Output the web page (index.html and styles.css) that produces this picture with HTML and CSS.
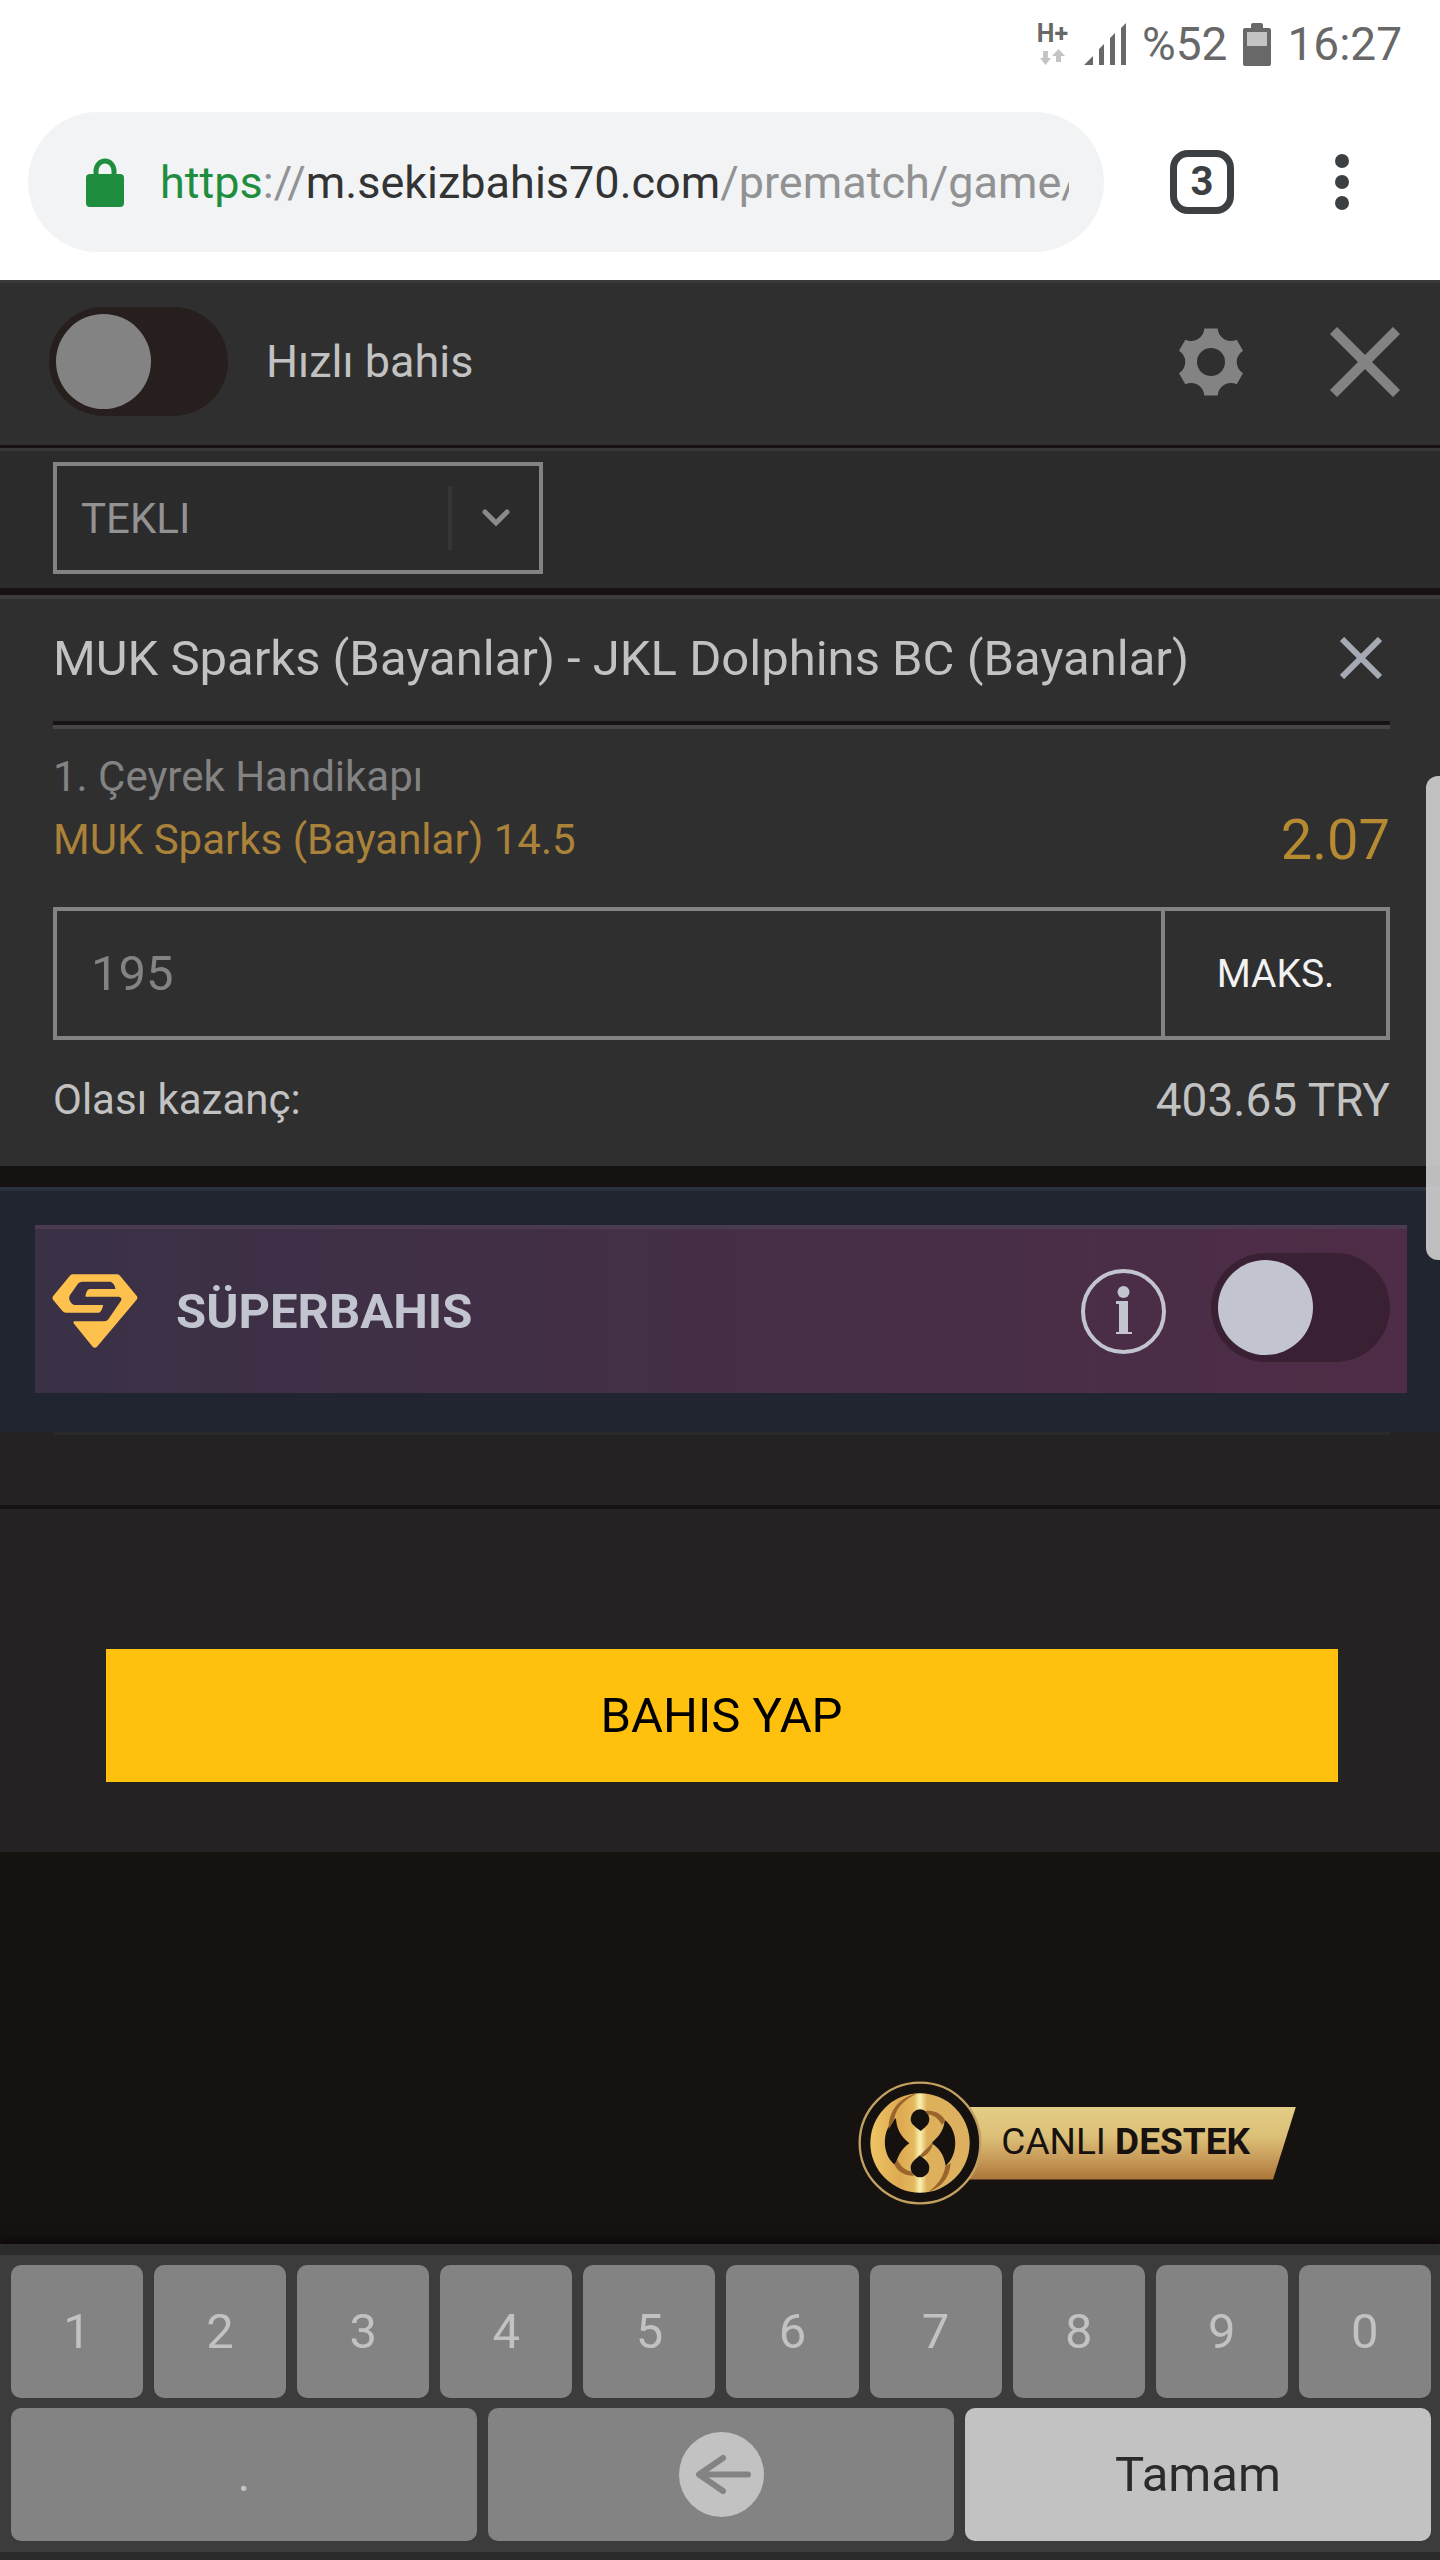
FILE: index.html
```html
<!DOCTYPE html>
<html lang="tr">

<head>
    <meta charset="UTF-8">
    <meta name="viewport" content="width=device-width, initial-scale=1.0">
    <title>Bahis Kuponu</title>
    <link rel="stylesheet" href="styles.css">
</head>

<body>
    <!-- Status bar -->
    <div class="status-bar">
        <div class="network">
            <span>H+</span>
            <svg width="26" height="16" viewBox="0 0 26 16">
                <path d="M4 2H9V9H12L6.500 16L1 9H4ZM17 13H22V7H26L19.500 0L13 7H17Z" fill="#c4c4c4" />
            </svg>
        </div>
        <svg width="42" height="42" viewBox="0 0 42 42" fill="#686868">
            <path d="M0 42L9 33V42ZM15 26L20 21V42H15ZM26 15L31 10V42H26ZM37 5L42 0V42H37Z" />
        </svg>
        <span>%52</span>
        <svg width="28" height="43" viewBox="0 0 28 43">
            <path d="M8 5V2Q8 0 10 0H18Q20 0 20 2V5H26Q28 5 28 7V41Q28 43 26 43H2Q0 43 0 41V7Q0 5 2 5Z" fill="#686868" />
            <rect x="4" y="9" width="20" height="14" fill="#c4c4c4" />
        </svg>
        <span>16:27</span>
    </div>

    <!-- Browser toolbar -->
    <div class="toolbar">
        <div class="address">
            <svg width="38" height="50" viewBox="0 0 38 50">
                <path d="M10 20V14A9 10 0 0 1 28 14V20" fill="none" stroke="#1e8e3e" stroke-width="5" />
                <rect y="17" width="38" height="33" rx="4" fill="#1e8e3e" />
            </svg>
            <div class="url"><span class="secure">https</span>://<span class="domain">m.sekizbahis70.com</span>/prematch/game/</div>
        </div>
        <button class="tabs" aria-label="Sekmeler">3</button>
        <button class="icon-button menu" aria-label="Menü">
            <svg width="14" height="56" viewBox="0 0 14 56" fill="#3c4043">
                <circle cx="7" cy="7" r="7" />
                <circle cx="7" cy="28" r="7" />
                <circle cx="7" cy="49" r="7" />
            </svg>
        </button>
    </div>

    <!-- Quick bet -->
    <div class="quick-bet">
        <input type="checkbox" class="toggle" id="quick">
        <label for="quick">Hızlı bahis</label>
        <button class="icon-button" aria-label="Ayarlar">
            <svg width="70" height="70" viewBox="-35 -35 70 70">
                <path fill="#838383" fill-rule="evenodd" d="M-6.700-33.500H6.700A13.300 13.300 0 0 0 25.700-22.300L32-11.300A13.300 13.300 0 0 0 32 11.300L25.700 22.300A13.300 13.300 0 0 0 6.700 33.500H-6.700A13.300 13.300 0 0 0-25.700 22.300L-32 11.300A13.300 13.300 0 0 0-32-11.300L-25.700-22.300A13.300 13.300 0 0 0-6.700-33.500ZM14 0A14 14 0 0 0-14 0A14 14 0 0 0 14 0Z" />
            </svg>
        </button>
        <button class="icon-button" aria-label="Kapat">
            <svg width="70" height="70" viewBox="-35 -35 70 70">
                <path d="M-31.500-31.500L31.500 31.500M31.500-31.500L-31.500 31.500" stroke="#838383" stroke-width="10" />
            </svg>
        </button>
    </div>

    <!-- Bet type -->
    <div class="bet-type">
        <div class="select-box">
            <select aria-label="Bahis türü">
                <option>TEKLI</option>
            </select>
            <span class="separator"></span>
            <svg width="30" height="20" viewBox="0 0 30 20">
                <path d="M4 4L15 15L26 4" fill="none" stroke="#8a8a8a" stroke-width="5" stroke-linecap="round" />
            </svg>
        </div>
    </div>

    <!-- Selected event -->
    <div class="event">
        <div class="event-title">
            <span>MUK Sparks (Bayanlar) - JKL Dolphins BC (Bayanlar)</span>
            <button class="icon-button" aria-label="Sil">
                <svg width="42" height="42" viewBox="0 0 42 42">
                    <path d="M2 2L40 40M40 2L2 40" stroke="#a4a9b4" stroke-width="6" />
                </svg>
            </button>
        </div>
        <div class="market">1. Çeyrek Handikapı</div>
        <div class="selection">
            <span>MUK Sparks (Bayanlar) 14.5</span>
            <span class="odds">2.07</span>
        </div>
        <div class="stake">
            <input type="text" value="195" aria-label="Miktar">
            <button>MAKS.</button>
        </div>
        <div class="winnings">
            <span>Olası kazanç:</span>
            <span class="amount">403.65 TRY</span>
        </div>
    </div>

    <!-- Super bet -->
    <div class="super">
        <div class="super-card">
            <svg width="86" height="74" viewBox="156 223 256 222">
                <path fill="#ffc14d" d="M216 224H352Q356 225 359 228L410 290Q412 295 410 299L290 441Q283 447 277 441L221 372Q217 366 223 365H312Q320 365 324 359L362 303Q367 294 356 291H256Q255 284 259 276Q262 268 268 268H345Q346 262 340 254Q335 246 330 246H246Q238 246 234 251L209 286Q204 295 209 304Q214 315 222 316H308Q309 320 304 330Q300 339 295 339H196Q191 339 187 335L158 300Q155 295 158 290L208 229Q212 224 216 224Z" />
            </svg>
            <label for="super">SÜPERBAHIS</label>
            <button class="icon-button" aria-label="Bilgi">
                <svg width="85" height="85" viewBox="0 0 85 85" fill="#c2c4cf">
                    <circle cx="42.500" cy="42.500" r="40.500" fill="none" stroke="#c2c4cf" stroke-width="4" />
                    <circle cx="42.500" cy="23" r="6" />
                    <path d="M35 32H47V63H51V65H35V63H38V35H35Z" />
                </svg>
            </button>
            <input type="checkbox" class="toggle toggle-super" id="super">
        </div>
    </div>

    <!-- Submit -->
    <div class="submit">
        <div class="summary"></div>
        <button>BAHIS YAP</button>
    </div>

    <!-- Live support -->
    <div class="support">
        <a href="#" class="support-link">
            <svg width="124" height="124" viewBox="114 93 372 372">
                <defs>
                    <linearGradient id="gold">
                        <stop offset="0" stop-color="#efc564" />
                        <stop offset="0.3" stop-color="#dda951" />
                        <stop offset="0.44" stop-color="#e5b95f" />
                        <stop offset="0.5" stop-color="#f9f2b2" />
                        <stop offset="0.57" stop-color="#deb05a" />
                        <stop offset="1" stop-color="#dcb160" />
                    </linearGradient>
                </defs>
                <circle cx="300" cy="279" r="181" fill="#15110f" stroke="#c2a062" stroke-width="7" />
                <circle cx="300" cy="279" r="149" fill="url(#gold)" />
                <g fill="#15110f">
                    <path d="M228 205C184 235 184 316 226 345C232 325 240 300 268 280C244 260 230 240 228 205Z" />
                    <path d="M374 210C416 240 416 316 377 347C372 315 358 294 334 280C350 264 372 246 374 210Z" />
                    <path d="M300 178A29 29 0 0 1 328 207C328 225 314 232 302 243C290 232 272 225 272 207A29 29 0 0 1 300 178Z" />
                    <path d="M300 316C312 327 328 336 328 354A28 28 0 0 1 272 354C272 336 288 327 300 316Z" />
                </g>
                <g fill="#9a652b">
                    <path d="M206 238C204 185 238 142 292 130C250 150 224 180 223 210Z" />
                    <path d="M317 183C345 180 366 193 376 212L366 225C356 206 342 195 321 192Z" />
                    <path d="M340 276C336 299 322 314 306 323L300 316Z" />
                    <path d="M232 329C242 350 256 360 274 365L281 378C252 377 232 364 223 343Z" />
                    <path d="M392 340C388 383 366 413 324 426C354 405 372 378 376 348Z" />
                </g>
            </svg>
            <span class="support-text">CANLI <b>DESTEK</b></span>
        </a>
    </div>

    <!-- Keypad -->
    <div class="keypad">
        <div class="keys">
            <button>1</button>
            <button>2</button>
            <button>3</button>
            <button>4</button>
            <button>5</button>
            <button>6</button>
            <button>7</button>
            <button>8</button>
            <button>9</button>
            <button>0</button>
        </div>
        <div class="keys">
            <button>.</button>
            <button aria-label="Geri al">
                <svg width="85" height="85" viewBox="0 0 85 85">
                    <circle cx="42.500" cy="42.500" r="42.500" fill="#c2c2c2" />
                    <path d="M69 42.500H21M44 26L20 42.500L44 59" fill="none" stroke="#838383" stroke-width="6" stroke-linecap="round" stroke-linejoin="round" />
                </svg>
            </button>
            <button class="done">Tamam</button>
        </div>
    </div>

    <div class="scroll-handle"></div>
</body>

</html>
```

FILE: styles.css
```css
* {
    box-sizing: border-box;
}

body {
    display: flex;
    flex-direction: column;
    min-height: 100vh;
    margin: 0;
    position: relative;
    font-family: Roboto, sans-serif;
    font-size: 42px;
    color: #c2c2c2;
    background-color: #161210;
}

button,
input,
select {
    font: inherit;
    color: inherit;
    margin: 0;
    padding: 0;
    border: none;
    border-radius: 0;
    background: none;
}

svg {
    display: block;
    flex-shrink: 0;
}

.icon-button {
    display: flex;
    align-items: center;
    justify-content: center;
    cursor: pointer;
}

/* Status bar */
.status-bar {
    display: flex;
    justify-content: flex-end;
    align-items: center;
    gap: 16px;
    height: 88px;
    padding: 0 38px;
    background-color: #fff;
    color: #686868;
    font-size: 46px;
}

.network {
    display: flex;
    flex-direction: column;
    align-items: center;
    gap: 4px;
    font-size: 25px;
    font-weight: bold;
    line-height: 22px;
}

/* Browser toolbar */
.toolbar {
    display: flex;
    align-items: center;
    padding: 24px 78px 28px 28px;
    background-color: #fff;
}

.address {
    flex: 1;
    min-width: 0;
    display: flex;
    align-items: center;
    gap: 36px;
    height: 140px;
    padding: 0 35px 0 58px;
    border-radius: 70px;
    background-color: #f1f3f5;
}

.url {
    flex: 1;
    overflow: hidden;
    white-space: nowrap;
    font-size: 45px;
    color: #929292;
}

.secure {
    color: #1e8e3e;
}

.domain {
    color: #333;
}

.tabs {
    width: 64px;
    height: 64px;
    margin-left: 66px;
    border: 7px solid #3c4043;
    border-radius: 18px;
    color: #3c4043;
    font-size: 40px;
    font-weight: bold;
    line-height: 48px;
}

.menu {
    width: 40px;
    margin-left: 88px;
}

/* Toggle switch */
.toggle {
    appearance: none;
    flex-shrink: 0;
    width: 179px;
    height: 109px;
    padding: 7px;
    border-radius: 55px;
    background-color: #271f1d;
}

.toggle::before {
    content: "";
    display: block;
    width: 95px;
    height: 95px;
    border-radius: 50%;
    background-color: #838383;
}

.toggle:checked::before {
    margin-left: auto;
}

.toggle-super {
    background-color: #3a2033;
}

.toggle-super::before {
    background-color: #c2c5cf;
}

/* Quick bet */
.quick-bet {
    display: flex;
    align-items: center;
    height: 168px;
    padding: 0 40px 5px 49px;
    border-top: 3px solid #383838;
    border-bottom: 3px solid #161211;
    background-color: #2f2f2f;
}

.quick-bet label {
    flex: 1;
    margin-left: 38px;
    font-size: 45px;
}

.quick-bet .icon-button:last-child {
    margin-left: 84px;
}

/* Bet type */
.bet-type {
    padding: 11px 53px 14px;
    border-top: 3px solid #383838;
    border-bottom: 7px solid #161211;
    background-color: #2b2b2b;
}

.select-box {
    display: flex;
    align-items: center;
    width: 490px;
    height: 112px;
    padding-right: 28px;
    border: 4px solid #838383;
    color: #929292;
}

.select-box select {
    flex: 1;
    height: 100%;
    padding-left: 24px;
    appearance: none;
}

.separator {
    width: 4px;
    height: 64px;
    margin-right: 29px;
    background-color: #353535;
}

/* Selected event */
.event {
    padding: 0 50px 23px 53px;
    border-top: 4px solid #3b3b3b;
    background-color: #2f2f2f;
}

.event-title {
    display: flex;
    justify-content: space-between;
    align-items: center;
    height: 130px;
    padding: 0 8px 8px 0;
    border-bottom: 4px solid #464646;
    box-shadow: inset 0 -4px #191413;
    font-size: 49px;
}

.market {
    margin-top: 16px;
    line-height: 64px;
    color: #838383;
}

.selection {
    display: flex;
    justify-content: space-between;
    line-height: 62px;
    color: #aa8239;
}

.odds {
    font-size: 56px;
    color: #b58a31;
}

.stake {
    display: flex;
    height: 133px;
    margin-top: 36px;
    border: 4px solid #838383;
}

.stake input {
    flex: 1;
    min-width: 0;
    padding-left: 34px;
    color: #838383;
    font-size: 49px;
}

.stake button {
    width: 225px;
    border-left: 4px solid #838383;
    color: #f2f2f2;
    font-size: 39px;
}

.winnings {
    display: flex;
    justify-content: space-between;
    align-items: center;
    height: 87px;
    margin-top: 16px;
}

.amount {
    font-size: 46px;
}

/* Super bet */
.super {
    margin-top: 21px;
    padding: 34px 33px 39px 35px;
    border-top: 4px solid #2c313e;
    background-color: #212530;
}

.super-card {
    display: flex;
    align-items: center;
    height: 168px;
    padding: 0 17px;
    border-top: 4px solid #4b3b52;
    background-image: linear-gradient(to right, #3a3146, #4f2c47);
    color: #c2c5cf;
    font-weight: bold;
}

.super-card label {
    flex: 1;
    margin-left: 38px;
    font-size: 49px;
}

.super-card .toggle {
    margin-left: 45px;
    margin-bottom: 8px;
}

/* Submit */
.submit {
    padding: 0 50px 70px 53px;
    background-color: #242223;
}

.summary {
    height: 77px;
    margin: 0 -50px 140px -53px;
    border-bottom: 4px solid #161211;
}

.summary::before {
    content: "";
    display: block;
    height: 3px;
    margin: 0 50px 0 53px;
    background-color: #2b2a2a;
}

.submit button {
    display: block;
    width: calc(100% - 105px);
    height: 133px;
    margin: 0 auto;
    background-color: #ffc10d;
    color: #000;
    font-size: 49px;
    cursor: pointer;
}

/* Live support */
.support {
    flex: 1;
    display: flex;
    justify-content: flex-end;
    align-items: flex-end;
    padding: 40px 144px 39px;
}

.support-link {
    display: flex;
    align-items: center;
    text-decoration: none;
}

.support-link svg {
    z-index: 1;
}

.support-text {
    height: 73px;
    margin-left: -15px;
    padding: 0 46px 0 34px;
    background-image: linear-gradient(#e4cd86, #dcc078 40%, #c89c5a 70%, #ab763a);
    clip-path: polygon(0 0, 100% 0, calc(100% - 23px) 100%, 0 100%);
    color: #17120f;
    font-size: 37px;
    line-height: 70px;
}

/* Keypad */
.keypad {
    display: flex;
    flex-direction: column;
    gap: 10px;
    padding: 10px 9px 11px 11px;
    border-top: 11px solid #2b2b2b;
    border-bottom: 8px solid #2b2b2b;
    background-color: #3c3c3c;
    box-shadow: 0 -4px 8px #0a0807;
}

.keys {
    display: flex;
    gap: 11px;
}

.keys button {
    flex: 1;
    display: flex;
    align-items: center;
    justify-content: center;
    height: 133px;
    border-radius: 10px;
    background-color: #838383;
    font-size: 49px;
}

.keys .done {
    background-color: #c2c2c2;
    color: #2b2b2b;
}

/* Edge panel handle */
.scroll-handle {
    position: absolute;
    top: 776px;
    right: 0;
    width: 14px;
    height: 484px;
    border-radius: 12px 0 0 12px;
    background-color: rgba(208, 208, 208, 0.9);
}
```
